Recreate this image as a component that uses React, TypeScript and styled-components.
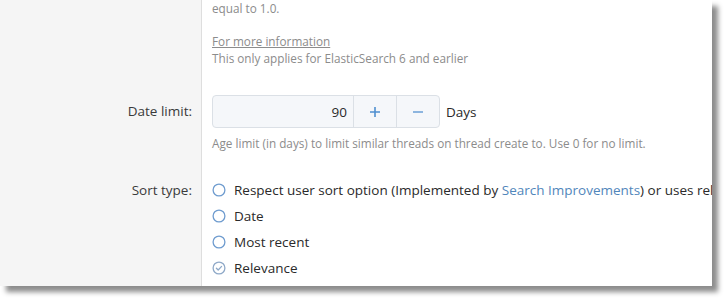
import React from "react";
import styled, { createGlobalStyle } from "styled-components";

const Global = createGlobalStyle`
  html, body { margin: 0; padding: 0; background: #ffffff; }
  body { font-family: "Open Sans", "Noto Sans", sans-serif; -webkit-font-smoothing: antialiased; }
`;

const Stage = styled.div`
  width: 726px;
  height: 300px;
  overflow: hidden;
  background: #ffffff;
`;

const Panel = styled.div`
  width: 712px;
  height: 286px;
  background: #ffffff;
  overflow: hidden;
  box-shadow: 6px 6px 5px rgba(0, 0, 0, 0.45);
  display: flex;
  flex-direction: column;
`;

const Row = styled.div<{ $grow?: boolean }>`
  display: grid;
  grid-template-columns: 202px 1fr;
  flex: ${(p) => (p.$grow ? "1 1 auto" : "0 0 auto")};
`;

const LabelCell = styled.div<{ $pt: number; $pb: number }>`
  background: #f5f5f5;
  border-right: 1px solid #dedede;
  text-align: right;
  padding: ${(p) => p.$pt}px 9px ${(p) => p.$pb}px 0;
  font-size: 13.5px;
  color: #3a3a3a;
`;

const ContentCell = styled.div<{ $pt: number; $pb: number }>`
  padding: ${(p) => p.$pt}px 0 ${(p) => p.$pb}px 10px;
  min-width: 0;
  overflow: hidden;
`;

const Explain = styled.div<{ $mt?: number }>`
  font-size: 11.75px;
  line-height: 16.5px;
  color: #8c8c8c;
  margin-top: ${(p) => p.$mt ?? 0}px;
  white-space: nowrap;
`;

const MutedLink = styled.a`
  color: #8c8c8c;
  text-decoration: underline;
`;

const InputRow = styled.div`
  display: flex;
  align-items: center;
  gap: 6px;
`;

const InputGroup = styled.div`
  display: flex;
  width: 228px;
  height: 33px;
  border: 1px solid #dbe0e6;
  border-radius: 4px;
  background: #f5f7fa;
  box-sizing: border-box;
  overflow: hidden;
`;

const NumberField = styled.div`
  flex: 1 1 auto;
  display: flex;
  align-items: center;
  justify-content: flex-end;
  padding-right: 6px;
  font-size: 13.5px;
  color: #2a2a2a;
`;

const StepButton = styled.div`
  flex: 0 0 42px;
  display: flex;
  align-items: center;
  justify-content: center;
  border-left: 1px solid #dbe0e6;
`;

const Units = styled.span`
  font-size: 13.5px;
  color: #2a2a2a;
`;

const LabelText = styled.div<{ $h: number }>`
  line-height: ${(p) => p.$h}px;
`;

const RadioList = styled.div`
  display: flex;
  flex-direction: column;
`;

const RadioItem = styled.div`
  display: flex;
  align-items: center;
  height: 25.8px;
  gap: 8px;
  font-size: 13.5px;
  color: #2a2a2a;
  white-space: nowrap;
`;

const InlineLink = styled.a`
  color: #5186bb;
  text-decoration: none;
`;

const RadioIcon = ({ checked }: { checked?: boolean }) => (
  <svg width="14" height="14" viewBox="0 0 14 14" style={{ flex: "0 0 14px" }}>
    <circle cx="7" cy="7" r="5.9" fill="none" stroke={checked ? "#8fa9c8" : "#6f9ccf"} strokeWidth="1.3" />
    {checked && (
      <path d="M4.4 7.2 L6.2 9 L9.6 5.4" fill="none" stroke="#8fa9c8" strokeWidth="1.3" strokeLinecap="round" strokeLinejoin="round" />
    )}
  </svg>
);

const PlusIcon = () => (
  <svg width="12" height="12" viewBox="0 0 12 12">
    <path d="M6 1 V11 M1 6 H11" stroke="#4f8fd0" strokeWidth="1.6" />
  </svg>
);

const MinusIcon = () => (
  <svg width="12" height="12" viewBox="0 0 12 12">
    <path d="M1 6 H11" stroke="#6a9fd6" strokeWidth="1.6" />
  </svg>
);

export default function App() {
  return (
    <Stage>
      <Global />
      <Panel>
        <Row>
          <LabelCell $pt={0} $pb={12} />
          <ContentCell $pt={0} $pb={12}>
            <Explain>equal to 1.0.</Explain>
            <Explain>&nbsp;</Explain>
            <Explain>
              <MutedLink>For more information</MutedLink>
            </Explain>
            <Explain>This only applies for ElasticSearch 6 and earlier</Explain>
          </ContentCell>
        </Row>
        <Row>
          <LabelCell $pt={17} $pb={10}>
            <LabelText $h={33}>Date limit:</LabelText>
          </LabelCell>
          <ContentCell $pt={17} $pb={10}>
            <InputRow>
              <InputGroup>
                <NumberField>90</NumberField>
                <StepButton>
                  <PlusIcon />
                </StepButton>
                <StepButton>
                  <MinusIcon />
                </StepButton>
              </InputGroup>
              <Units>Days</Units>
            </InputRow>
            <Explain $mt={7}>
              Age limit (in days) to limit similar threads on thread create to. Use 0 for no limit.
            </Explain>
          </ContentCell>
        </Row>
        <Row $grow>
          <LabelCell $pt={16} $pb={0}>
            <LabelText $h={25.8}>Sort type:</LabelText>
          </LabelCell>
          <ContentCell $pt={16} $pb={0}>
            <RadioList>
              <RadioItem>
                <RadioIcon />
                <span>
                  Respect user sort option (Implemented by <InlineLink>Search Improvements</InlineLink>) or uses relevance
                </span>
              </RadioItem>
              <RadioItem>
                <RadioIcon />
                <span>Date</span>
              </RadioItem>
              <RadioItem>
                <RadioIcon />
                <span>Most recent</span>
              </RadioItem>
              <RadioItem>
                <RadioIcon checked />
                <span>Relevance</span>
              </RadioItem>
            </RadioList>
          </ContentCell>
        </Row>
      </Panel>
    </Stage>
  );
}
